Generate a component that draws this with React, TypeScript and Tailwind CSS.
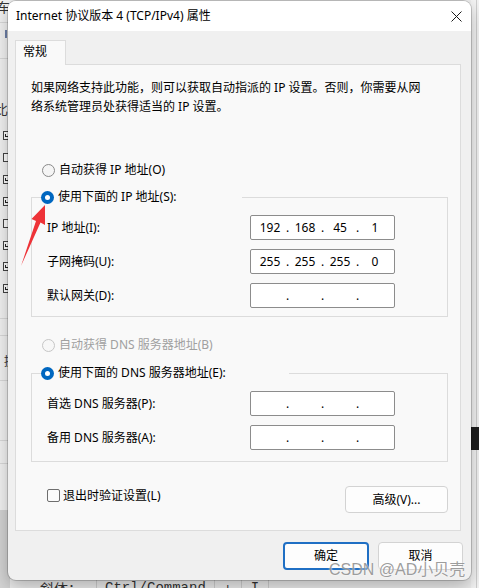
import React from "react";

const FONT = { fontFamily: "'Noto Sans', 'Noto Sans CJK SC', sans-serif" };

function Radio({ checked, disabled }: { checked?: boolean; disabled?: boolean }) {
  if (checked) {
    return (
      <span className="flex h-[13px] w-[13px] shrink-0 items-center justify-center rounded-full bg-[#0067c0]">
        <span className="h-[5px] w-[5px] rounded-full bg-white" />
      </span>
    );
  }
  return (
    <span
      className={
        disabled
          ? "h-[13px] w-[13px] shrink-0 rounded-full border border-[#c6c6c6] bg-[#f7f7f7]"
          : "h-[13px] w-[13px] shrink-0 rounded-full border border-[#8a8a8a] bg-[#f5f5f5]"
      }
    />
  );
}

function IpField({ parts }: { parts: string[] }) {
  return (
    <div className="flex h-[25px] w-[145px] items-center rounded-[2px] border border-[#8c8c8c] bg-white pl-[3px] text-[12px] text-black">
      <span className="w-[32px] text-center">{parts[0]}</span>
      <span className="w-[3px] text-center">.</span>
      <span className="w-[32px] text-center">{parts[1]}</span>
      <span className="w-[3px] text-center">.</span>
      <span className="w-[32px] text-center">{parts[2]}</span>
      <span className="w-[3px] text-center">.</span>
      <span className="w-[32px] text-center">{parts[3]}</span>
    </div>
  );
}

function FieldRow({ label, parts }: { label: string; parts: string[] }) {
  return (
    <div className="grid h-[25px] grid-cols-[203px_145px] items-center">
      <span className="leading-[16px]">{label}</span>
      <IpField parts={parts} />
    </div>
  );
}

export default function App() {
  const empty = ["", "", "", ""];
  return (
    <div className="relative h-[588px] w-[479px] overflow-hidden bg-[#ededed] text-[12px] text-black" style={FONT}>
      {/* background desktop: left strip */}
      <div className="absolute left-0 top-0 h-[588px] w-[10px] bg-[#f3f3f3]">
        <span className="absolute left-[-3px] top-[0px] text-[13px] leading-[14px] text-[#333]">车</span>
        <div className="absolute left-0 top-[22px] h-px w-[10px] bg-[#dadada]" />
        <div className="absolute left-[5px] top-[30px] h-[8px] w-[2px] bg-[#6d7fa8]" />
        <div className="absolute left-0 top-[58px] h-px w-[10px] bg-[#dadada]" />
        <span className="absolute left-[-5px] top-[102px] text-[13px] leading-[14px] text-[#333]">比</span>
        {[131, 153, 175, 197, 219, 241, 262, 284].map((t, i) => (
          <div
            key={t}
            className="absolute left-[3px] h-[9px] w-[9px] border border-[#444] bg-white"
            style={{ top: t }}
          >
            {i !== 1 && i !== 4 ? <div className="ml-[1px] mt-[2px] h-[3px] w-[4px] border-b border-l border-[#222]" /> : null}
          </div>
        ))}
        <div className="absolute left-0 top-[318px] h-px w-[10px] bg-[#dadada]" />
        <div className="absolute left-0 top-[335px] h-px w-[10px] bg-[#dadada]" />
        <span className="absolute left-[4px] top-[355px] text-[12px] leading-[14px] text-[#333]">提</span>
        <div className="absolute left-0 top-[380px] h-px w-[10px] bg-[#dadada]" />
        <div className="absolute left-0 top-[440px] h-px w-[10px] bg-[#dadada]" />
        <div className="absolute left-0 top-[463px] h-px w-[10px] bg-[#dadada]" />
        <div className="absolute left-0 top-[510px] h-[78px] w-[10px] bg-[#d4d4d4]" />
      </div>
      {/* right strip */}
      <div className="absolute right-0 top-0 h-[588px] w-[8px] bg-[#f4f4f4]">
        <div className="absolute right-[2px] top-0 h-[588px] w-px bg-[#cfcfcf]" />
        <div className="absolute right-0 top-[427px] h-[23px] w-[8px] bg-[#1e1e1e]" />
      </div>
      {/* bottom strip text */}
      <div className="absolute left-[40px] top-[578px] flex h-[20px] items-center text-[14px] text-[#333]">
        <span className="pr-[14px]">斜体：</span>
        <span className="h-[20px] w-px bg-[#cfcfcf]" />
        <span className="px-[8px]" style={{ fontFamily: "'Liberation Mono', monospace" }}>
          Ctrl/Command
        </span>
        <span className="h-[20px] w-px bg-[#cfcfcf]" />
        <span className="px-[9px]">+</span>
        <span className="h-[20px] w-px bg-[#cfcfcf]" />
        <span className="px-[9px]" style={{ fontFamily: "'Liberation Mono', monospace" }}>
          I
        </span>
        <span className="h-[20px] w-px bg-[#cfcfcf]" />
      </div>

      {/* dialog window */}
      <div className="absolute left-[8px] top-[1px] flex h-[579px] w-[463px] flex-col overflow-hidden rounded-[8px] bg-[#f0f0f0] shadow-[0_0_0_1px_rgba(0,0,0,0.18),0_6px_18px_rgba(0,0,0,0.28)]">
        {/* title bar */}
        <div className="flex h-[30px] shrink-0 items-center justify-between bg-white pl-[8px] pr-[9px]">
          <span className="leading-[16px]">Internet 协议版本 4 (TCP/IPv4) 属性</span>
          <svg width="11" height="11" viewBox="0 0 11 11" className="shrink-0">
            <path d="M0.5 0.5 L10.5 10.5 M10.5 0.5 L0.5 10.5" stroke="#1a1a1a" strokeWidth="1" fill="none" />
          </svg>
        </div>

        {/* body */}
        <div className="flex flex-1 flex-col pt-[9px]">
          {/* tab */}
          <div className="relative z-10 ml-[7px] mb-[-1px] flex h-[25px] w-[51px] items-start border border-b-0 border-[#dcdcdc] bg-[#f9f9f9] pl-[7px] pt-[3px]">
            <span className="leading-[16px]">常规</span>
          </div>
          {/* panel */}
          <div className="ml-[7px] flex h-[467px] w-[446px] flex-col border border-[#dcdcdc] bg-[#f9f9f9] pl-[15px] pr-[12px] pt-[13px]">
            <p className="leading-[19px]">
              如果网络支持此功能，则可以获取自动指派的 IP 设置。否则，你需要从网
              <br />
              络系统管理员处获得适当的 IP 设置。
            </p>

            <div className="mt-[45px] flex h-[18px] items-center gap-[4px] pl-[11px]">
              <Radio />
              <span className="leading-[16px]">自动获得 IP 地址(O)</span>
            </div>

            <fieldset className="mt-[9px] w-[417px] border border-[#dcdcdc]">
              <legend className="ml-[9px] flex h-[18px] w-[201px] items-center gap-[4px]">
                <Radio checked />
                <span className="leading-[16px]">使用下面的 IP 地址(S):</span>
              </legend>
              <div className="flex flex-col gap-[9px] pb-[8px] pl-[15px] pt-[9px]">
                <FieldRow label="IP 地址(I):" parts={["192", "168", "45", "1"]} />
                <FieldRow label="子网掩码(U):" parts={["255", "255", "255", "0"]} />
                <FieldRow label="默认网关(D):" parts={empty} />
              </div>
            </fieldset>

            <div className="mt-[19px] flex h-[18px] items-center gap-[4px] pl-[11px] text-[#a0a0a0]">
              <Radio disabled />
              <span className="leading-[16px]">自动获得 DNS 服务器地址(B)</span>
            </div>

            <fieldset className="mt-[10px] w-[417px] border border-[#dcdcdc]">
              <legend className="ml-[9px] flex h-[18px] w-[248px] items-center gap-[4px]">
                <Radio checked />
                <span className="leading-[16px]">使用下面的 DNS 服务器地址(E):</span>
              </legend>
              <div className="flex flex-col gap-[9px] pb-[11px] pl-[15px] pt-[9px]">
                <FieldRow label="首选 DNS 服务器(P):" parts={empty} />
                <FieldRow label="备用 DNS 服务器(A):" parts={empty} />
              </div>
            </fieldset>

            <div className="mt-[24px] flex h-[27px] w-[417px] items-start justify-between">
              <div className="ml-[16px] mt-[2px] flex h-[15px] items-center gap-[3px]">
                <span className="h-[13px] w-[13px] rounded-[2px] border border-[#6e6e6e] bg-[#fbfbfb]" />
                <span className="leading-[16px]">退出时验证设置(L)</span>
              </div>
              <div className="flex h-[27px] w-[103px] items-center justify-center rounded-[4px] border border-[#d3d3d3] bg-[#fdfdfd]">
                高级(V)...
              </div>
            </div>
          </div>

          {/* buttons */}
          <div className="mt-[11px] flex justify-end gap-[9px] pr-[8px]">
            <div className="flex h-[28px] w-[86px] items-center justify-center rounded-[4px] border-2 border-[#1f6fc4] bg-[#fdfdfd]">
              确定
            </div>
            <div className="flex h-[28px] w-[85px] items-center justify-center rounded-[4px] border border-[#d3d3d3] bg-[#fdfdfd]">
              取消
            </div>
          </div>
        </div>
      </div>

      {/* watermark */}
      <div
        className="absolute left-[329px] top-[561px] text-[16px] leading-[18px] text-[rgba(140,140,140,0.85)] [text-shadow:0_0_2px_#fff]"
        style={{ fontFamily: "'Liberation Sans', 'Noto Sans CJK SC', sans-serif" }}
      >
        CSDN @AD小贝壳
      </div>

      {/* red arrow annotation */}
      <svg className="pointer-events-none absolute left-0 top-0" width="479" height="588" viewBox="0 0 479 588">
        <polygon
          points="45,205 45,225 40.5,222.5 21,266 36,221 31.5,219"
          fill="#ee3338"
        />
      </svg>
    </div>
  );
}
